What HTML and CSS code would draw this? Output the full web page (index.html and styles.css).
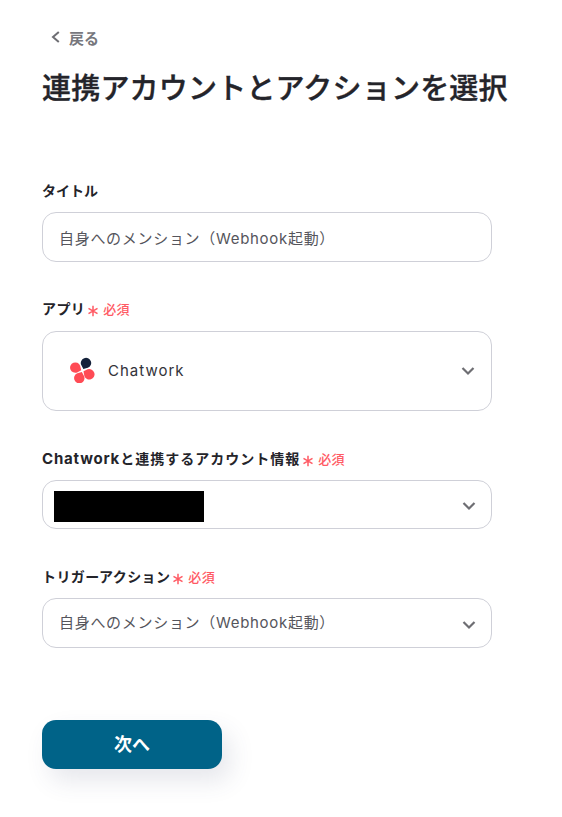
FILE: index.html
```html
<!DOCTYPE html>
<html lang="ja">
<head>
<meta charset="utf-8">
<title>連携アカウントとアクションを選択</title>
<link rel="stylesheet" href="styles.css">
</head>
<body>
<main class="page">
  <a class="back"><svg class="back-icon" viewBox="0 0 10 12" width="10" height="12"><path d="M8.8 1 L3 6 L8.8 11" fill="none" stroke="#6e6e73" stroke-width="2"/></svg><span>戻る</span></a>
  <h1 class="title">連携アカウントとアクションを選択</h1>
  <form class="form">
    <div class="field field-title">
      <div class="label"><span>タイトル</span></div>
      <div class="control control-text">自身へのメンション（Webhook起動）</div>
    </div>
    <div class="field field-app">
      <div class="label"><span>アプリ</span><span class="req"><svg class="star" viewBox="0 0 12 12" width="12" height="12"><path d="M6 .8 V11.2 M1.5 3.4 L10.5 8.6 M10.5 3.4 L1.5 8.6" fill="none" stroke="#ff5a64" stroke-width="1.5"/></svg>必須</span></div>
      <div class="control control-app">
        <svg class="logo" viewBox="0 0 26 26" width="26" height="26">
          <path transform="translate(6.3 10.6) rotate(-21)" d="M4.6 4.6 L0 5.2 A5.2 5.2 0 1 1 5.2 0 Z" fill="#ff4b55"/>
          <path transform="translate(17 6) rotate(69)" d="M4.6 4.6 L0 5.2 A5.2 5.2 0 1 1 5.2 0 Z" fill="#14213a"/>
          <path transform="translate(20.3 17.3) rotate(162)" d="M4.6 4.6 L0 5.2 A5.2 5.2 0 1 1 5.2 0 Z" fill="#ff4b55"/>
          <path transform="translate(10.3 21.1) rotate(-112)" d="M4.6 4.6 L0 5.2 A5.2 5.2 0 1 1 5.2 0 Z" fill="#ff4b55"/>
        </svg>
        <span class="app-name">Chatwork</span>
        <svg class="chev chev-app" viewBox="0 0 14 10" width="14" height="10"><path d="M1.5 2 L7 7.5 L12.5 2" fill="none" stroke="#6e6e73" stroke-width="2.2"/></svg>
      </div>
    </div>
    <div class="field field-account">
      <div class="label"><span><span class="latin">Chatwork</span>と連携するアカウント情報</span><span class="req"><svg class="star" viewBox="0 0 12 12" width="12" height="12"><path d="M6 .8 V11.2 M1.5 3.4 L10.5 8.6 M10.5 3.4 L1.5 8.6" fill="none" stroke="#ff5a64" stroke-width="1.5"/></svg>必須</span></div>
      <div class="control control-account">
        <div class="redact"></div>
        <svg class="chev" viewBox="0 0 14 10" width="14" height="10"><path d="M1.5 2 L7 7.5 L12.5 2" fill="none" stroke="#6e6e73" stroke-width="2.2"/></svg>
      </div>
    </div>
    <div class="field field-action">
      <div class="label"><span>トリガーアクション</span><span class="req"><svg class="star" viewBox="0 0 12 12" width="12" height="12"><path d="M6 .8 V11.2 M1.5 3.4 L10.5 8.6 M10.5 3.4 L1.5 8.6" fill="none" stroke="#ff5a64" stroke-width="1.5"/></svg>必須</span></div>
      <div class="control control-text control-action">自身へのメンション（Webhook起動）
        <svg class="chev" viewBox="0 0 14 10" width="14" height="10"><path d="M1.5 2 L7 7.5 L12.5 2" fill="none" stroke="#6e6e73" stroke-width="2.2"/></svg>
      </div>
    </div>
    <button class="next" type="button">次へ</button>
  </form>
</main>
</body>
</html>
```
FILE: styles.css
```css
* { box-sizing: border-box; }
html, body { margin: 0; padding: 0; background: #fff; }
body {
  font-family: Inter, "Noto Sans CJK JP", sans-serif;
  color: #24242a;
  height: 817px;
  overflow: hidden;
}
.page { padding: 28px 0 0 42px; width: 492px; }
.back {
  display: flex;
  align-items: center;
  gap: 9px;
  height: 20px;
  margin-left: 8px;
  padding-bottom: 2px;
  font-size: 15px;
  font-weight: 700;
  color: #77777d;
}
.title {
  margin: 20px 0 0;
  font-size: 29px;
  line-height: 42px;
  font-weight: 500;
  letter-spacing: 0.2px;
  -webkit-text-stroke: 0.35px #24242a;
  color: #24242a;
  white-space: nowrap;
}
.form { display: flex; flex-direction: column; margin-top: 71px; }
.field { display: flex; flex-direction: column; }
.label {
  display: flex;
  align-items: center;
  height: 20px;
  font-size: 14px;
  font-weight: 700;
  line-height: 20px;
  letter-spacing: 0.4px;
  color: #24242a;
  white-space: nowrap;
}
.field-title .label { letter-spacing: 0; }
.field-account .label { letter-spacing: 1px; }
.latin { font-size: 15px; letter-spacing: 0.8px; }
.req {
  display: flex;
  align-items: center;
  color: #ff5a64;
  font-size: 13px;
  font-weight: 500;
  letter-spacing: 0.4px;
  margin-left: 2px;
}
.star { display: block; width: 12px; height: 12px; margin: 3px 4px 0 0; flex: none; }
.control {
  position: relative;
  display: flex;
  align-items: center;
  margin-top: 11px;
  border: 1px solid #cfd0d8;
  border-radius: 14px;
  background: #fff;
  padding-left: 16px;
  font-size: 15px;
  color: #55555c;
  letter-spacing: 0.7px;
}
.control-text { height: 50px; }
.control-action { padding-bottom: 4px; }
.field-title { margin-bottom: 37px; }
.field-app { margin-bottom: 38px; }
.field-account { margin-bottom: 38px; }
.control-app { height: 80px; padding-left: 26px; padding-bottom: 2px; margin-top: 12px; }
.control-account { height: 49px; padding-left: 11px; }
.logo { display: block; flex: none; }
.app-name { margin-left: 13px; font-size: 15px; color: #33333a; letter-spacing: 1px; }
.redact { width: 150px; height: 31px; background: #000; margin-top: 3px; }
.chev { position: absolute; right: 15px; top: 50%; margin-top: -4px; }
.control-action .chev { margin-top: -3px; }
.chev-app { margin-top: -5px; right: 16px; }
.next {
  align-self: flex-start;
  width: 180px;
  height: 49px;
  margin-top: 72px;
  padding: 0 0 3px;
  border: 0;
  border-radius: 14px;
  background: #006388;
  color: #fff;
  font-family: inherit;
  font-size: 18px;
  font-weight: 700;
  box-shadow: 8px 12px 24px rgba(60, 70, 110, 0.13);
}
```
